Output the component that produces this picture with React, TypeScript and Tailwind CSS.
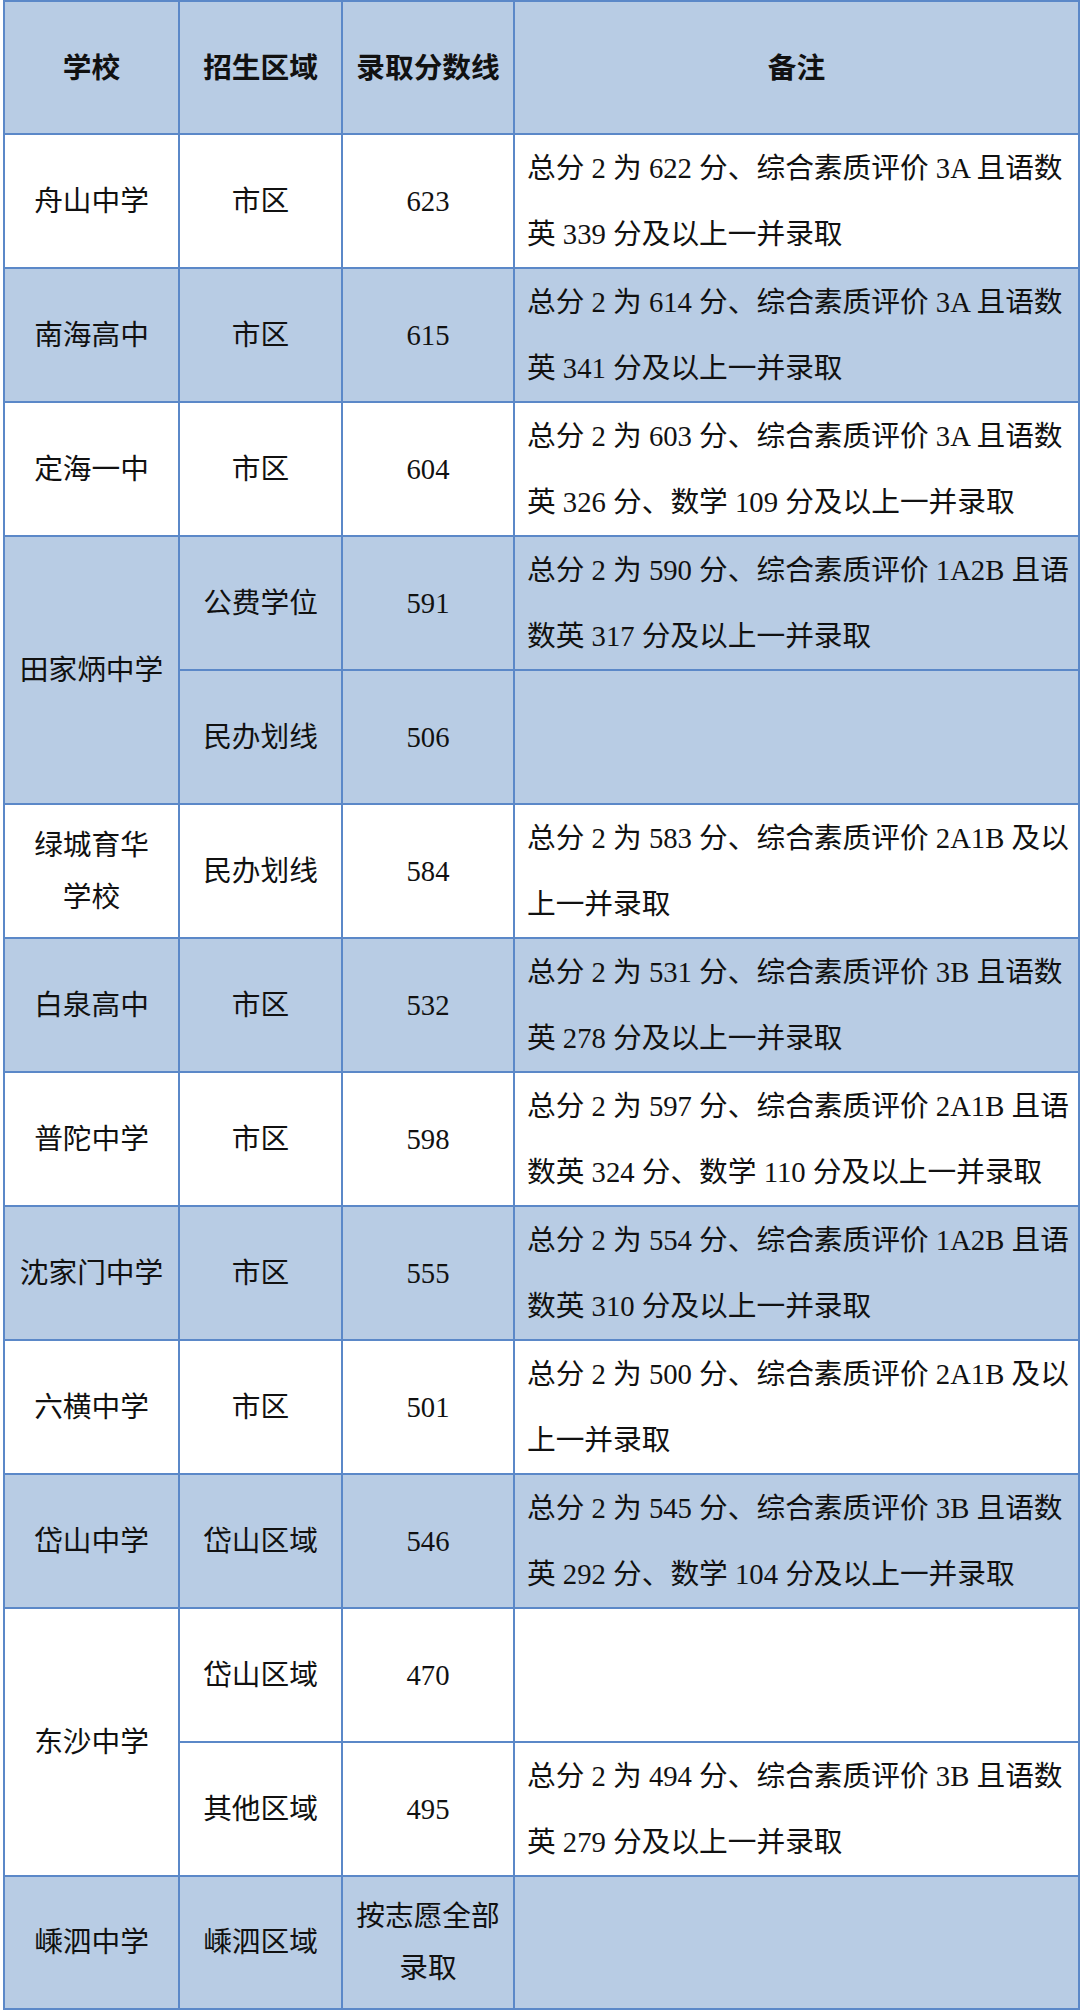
import React from 'react';

type Row = {
  school?: string[];
  span?: number;
  area: string;
  score: string[];
  note: string[];
  blue: boolean;
};

// 录取分数线数据
const rows: Row[] = [
  { school: ['舟山中学'], area: '市区', score: ['623'], note: ['总分 2 为 622 分、综合素质评价 3A 且语数', '英 339 分及以上一并录取'], blue: false },
  { school: ['南海高中'], area: '市区', score: ['615'], note: ['总分 2 为 614 分、综合素质评价 3A 且语数', '英 341 分及以上一并录取'], blue: true },
  { school: ['定海一中'], area: '市区', score: ['604'], note: ['总分 2 为 603 分、综合素质评价 3A 且语数', '英 326 分、数学 109 分及以上一并录取'], blue: false },
  { school: ['田家炳中学'], span: 2, area: '公费学位', score: ['591'], note: ['总分 2 为 590 分、综合素质评价 1A2B 且语', '数英 317 分及以上一并录取'], blue: true },
  { area: '民办划线', score: ['506'], note: [], blue: true },
  { school: ['绿城育华', '学校'], area: '民办划线', score: ['584'], note: ['总分 2 为 583 分、综合素质评价 2A1B 及以', '上一并录取'], blue: false },
  { school: ['白泉高中'], area: '市区', score: ['532'], note: ['总分 2 为 531 分、综合素质评价 3B 且语数', '英 278 分及以上一并录取'], blue: true },
  { school: ['普陀中学'], area: '市区', score: ['598'], note: ['总分 2 为 597 分、综合素质评价 2A1B 且语', '数英 324 分、数学 110 分及以上一并录取'], blue: false },
  { school: ['沈家门中学'], area: '市区', score: ['555'], note: ['总分 2 为 554 分、综合素质评价 1A2B 且语', '数英 310 分及以上一并录取'], blue: true },
  { school: ['六横中学'], area: '市区', score: ['501'], note: ['总分 2 为 500 分、综合素质评价 2A1B 及以', '上一并录取'], blue: false },
  { school: ['岱山中学'], area: '岱山区域', score: ['546'], note: ['总分 2 为 545 分、综合素质评价 3B 且语数', '英 292 分、数学 104 分及以上一并录取'], blue: true },
  { school: ['东沙中学'], span: 2, area: '岱山区域', score: ['470'], note: [], blue: false },
  { area: '其他区域', score: ['495'], note: ['总分 2 为 494 分、综合素质评价 3B 且语数', '英 279 分及以上一并录取'], blue: false },
  { school: ['嵊泗中学'], area: '嵊泗区域', score: ['按志愿全部', '录取'], note: [], blue: true },
];

const cell = 'border-2 border-[#5b88c8] text-center align-middle px-1 leading-[52px]';

const Lines = ({ items }: { items: string[] }) => (
  <>
    {items.map((t, i) => (
      <div key={i} className="whitespace-nowrap">
        {t}
      </div>
    ))}
  </>
);

export default function App() {
  return (
    <div className="w-[1080px] h-[2010px] bg-white font-['Liberation_Serif','Noto_Sans_CJK_SC',serif] text-[28.7px] text-[#111]">
      <table className="ml-[3px] w-[1075px] table-fixed border-collapse">
        <colgroup>
          <col className="w-[175px]" />
          <col className="w-[163px]" />
          <col className="w-[172px]" />
          <col className="w-[565px]" />
        </colgroup>
        <thead>
          <tr className="h-[133px] bg-[#b8cce4] font-bold">
            <th className={cell}>学校</th>
            <th className={cell}>招生区域</th>
            <th className={cell}>录取分数线</th>
            <th className={cell}>备注</th>
          </tr>
        </thead>
        <tbody>
          {rows.map((r, i) => (
            <tr key={i} className={`h-[133.8px] ${r.blue ? 'bg-[#b8cce4]' : 'bg-white'}`}>
              {r.school && (
                <td rowSpan={r.span ?? 1} className={cell}>
                  <Lines items={r.school} />
                </td>
              )}
              <td className={cell}>{r.area}</td>
              <td className={cell}>
                <Lines items={r.score} />
              </td>
              <td className="border-2 border-[#5b88c8] align-middle pl-3 leading-[66px]">
                <Lines items={r.note} />
              </td>
            </tr>
          ))}
        </tbody>
      </table>
    </div>
  );
}
